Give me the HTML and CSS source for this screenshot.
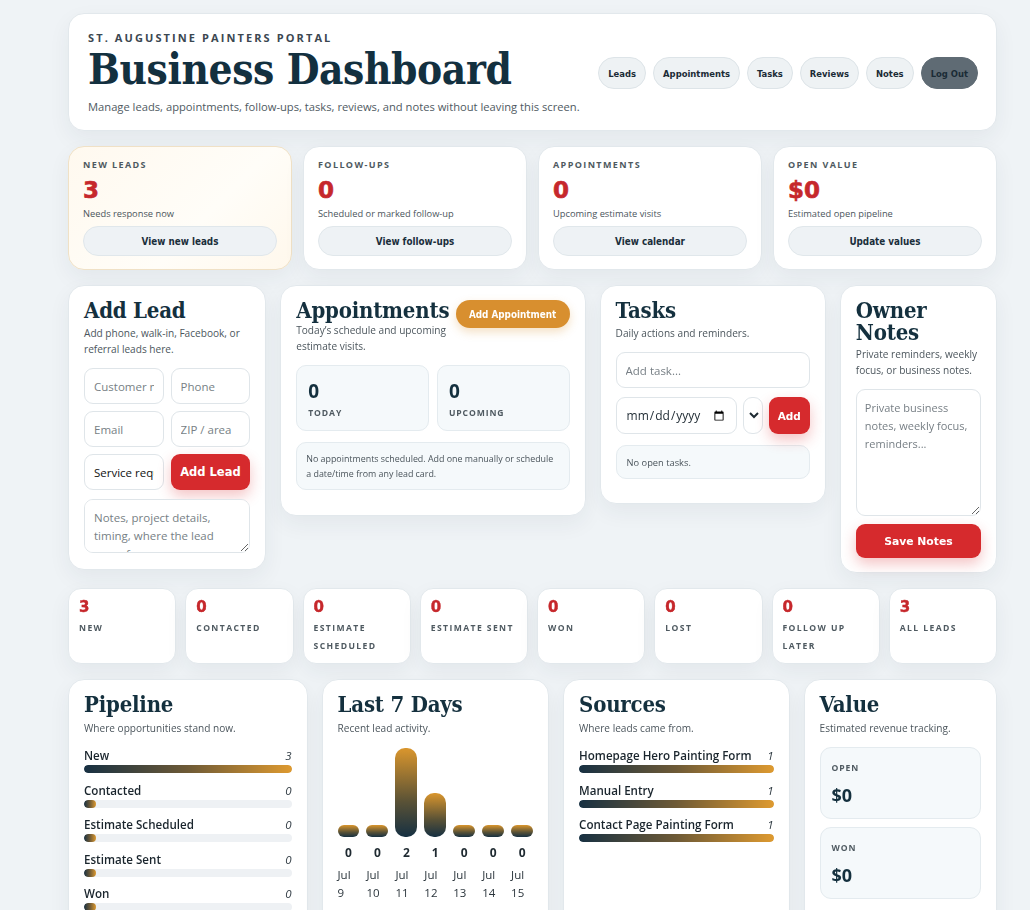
FILE: index.html
```html
<!DOCTYPE html>
<html lang="en">
<head>
<meta charset="utf-8">
<title>Business Dashboard</title>
<link rel="stylesheet" href="styles.css">
</head>
<body>
<main class="page">
  <header class="card hero">
    <div class="hero-text">
      <div class="eyebrow">ST. AUGUSTINE PAINTERS PORTAL</div>
      <h1 class="hero-title">Business Dashboard</h1>
      <p class="hero-sub">Manage leads, appointments, follow-ups, tasks, reviews, and notes without leaving this screen.</p>
    </div>
    <nav class="nav">
      <button class="pill">Leads</button>
      <button class="pill">Appointments</button>
      <button class="pill">Tasks</button>
      <button class="pill">Reviews</button>
      <button class="pill">Notes</button>
      <button class="pill pill-dark">Log Out</button>
    </nav>
  </header>

  <section class="stats">
    <div class="card stat stat-hot">
      <div class="stat-label">NEW LEADS</div>
      <div class="stat-num">3</div>
      <div class="stat-sub">Needs response now</div>
      <button class="soft-btn">View new leads</button>
    </div>
    <div class="card stat">
      <div class="stat-label">FOLLOW-UPS</div>
      <div class="stat-num">0</div>
      <div class="stat-sub">Scheduled or marked follow-up</div>
      <button class="soft-btn">View follow-ups</button>
    </div>
    <div class="card stat">
      <div class="stat-label">APPOINTMENTS</div>
      <div class="stat-num">0</div>
      <div class="stat-sub">Upcoming estimate visits</div>
      <button class="soft-btn">View calendar</button>
    </div>
    <div class="card stat">
      <div class="stat-label">OPEN VALUE</div>
      <div class="stat-num">$0</div>
      <div class="stat-sub">Estimated open pipeline</div>
      <button class="soft-btn">Update values</button>
    </div>
  </section>

  <section class="work">
    <div class="card panel lead-panel">
      <h2 class="panel-title">Add Lead</h2>
      <p class="panel-desc">Add phone, walk-in, Facebook, or referral leads here.</p>
      <div class="lead-form">
        <input class="field" placeholder="Customer name">
        <input class="field" placeholder="Phone">
        <input class="field" placeholder="Email">
        <input class="field" placeholder="ZIP / area">
        <input class="field field-val" value="Service request">
        <button class="red-btn">Add Lead</button>
        <textarea class="field lead-notes" placeholder="Notes, project details, timing, where the lead came from..."></textarea>
      </div>
    </div>

    <div class="card panel appt-panel">
      <div class="appt-head">
        <div class="appt-head-text">
          <h2 class="panel-title">Appointments</h2>
          <p class="panel-desc appt-desc">Today’s schedule and upcoming estimate visits.</p>
        </div>
        <button class="orange-btn">Add Appointment</button>
      </div>
      <div class="appt-boxes">
        <div class="mini-box">
          <div class="mini-num">0</div>
          <div class="mini-label">TODAY</div>
        </div>
        <div class="mini-box">
          <div class="mini-num">0</div>
          <div class="mini-label">UPCOMING</div>
        </div>
      </div>
      <div class="empty-box empty-appt">No appointments scheduled. Add one manually or schedule a date/time from any lead card.</div>
    </div>

    <div class="card panel task-panel">
      <h2 class="panel-title">Tasks</h2>
      <p class="panel-desc">Daily actions and reminders.</p>
      <input class="field task-input" placeholder="Add task...">
      <div class="task-row">
        <input class="field date-field" type="date">
        <select class="field sel-field"><option></option></select>
        <button class="red-btn add-btn">Add</button>
      </div>
      <div class="empty-box empty-task">No open tasks.</div>
    </div>

    <div class="card panel notes-panel">
      <h2 class="panel-title">Owner Notes</h2>
      <p class="panel-desc">Private reminders, weekly focus, or business notes.</p>
      <textarea class="field owner-notes" placeholder="Private business notes, weekly focus, reminders..."></textarea>
      <button class="red-btn save-btn">Save Notes</button>
    </div>
  </section>

  <section class="status-row">
    <div class="card status"><div class="status-num">3</div><div class="status-label">NEW</div></div>
    <div class="card status"><div class="status-num">0</div><div class="status-label">CONTACTED</div></div>
    <div class="card status"><div class="status-num">0</div><div class="status-label">ESTIMATE SCHEDULED</div></div>
    <div class="card status"><div class="status-num">0</div><div class="status-label">ESTIMATE SENT</div></div>
    <div class="card status"><div class="status-num">0</div><div class="status-label">WON</div></div>
    <div class="card status"><div class="status-num">0</div><div class="status-label">LOST</div></div>
    <div class="card status"><div class="status-num">0</div><div class="status-label">FOLLOW UP LATER</div></div>
    <div class="card status"><div class="status-num">3</div><div class="status-label">ALL LEADS</div></div>
  </section>

  <section class="reports">
    <div class="card panel report">
      <h2 class="panel-title">Pipeline</h2>
      <p class="panel-desc">Where opportunities stand now.</p>
      <div class="bars">
        <div class="bar-item"><div class="bar-head"><span>New</span><em>3</em></div><div class="track"><div class="fill" style="width:100%"></div></div></div>
        <div class="bar-item"><div class="bar-head"><span>Contacted</span><em>0</em></div><div class="track"><div class="fill fill-min"></div></div></div>
        <div class="bar-item"><div class="bar-head"><span>Estimate Scheduled</span><em>0</em></div><div class="track"><div class="fill fill-min"></div></div></div>
        <div class="bar-item"><div class="bar-head"><span>Estimate Sent</span><em>0</em></div><div class="track"><div class="fill fill-min"></div></div></div>
        <div class="bar-item"><div class="bar-head"><span>Won</span><em>0</em></div><div class="track"><div class="fill fill-min"></div></div></div>
      </div>
    </div>

    <div class="card panel report">
      <h2 class="panel-title">Last 7 Days</h2>
      <p class="panel-desc">Recent lead activity.</p>
      <div class="chart">
        <div class="col"><div class="col-plot"><div class="col-bar" style="height:12px"></div></div><div class="col-count">0</div><div class="col-date">Jul 9</div></div>
        <div class="col"><div class="col-plot"><div class="col-bar" style="height:12px"></div></div><div class="col-count">0</div><div class="col-date">Jul 10</div></div>
        <div class="col"><div class="col-plot"><div class="col-bar" style="height:89px"></div></div><div class="col-count">2</div><div class="col-date">Jul 11</div></div>
        <div class="col"><div class="col-plot"><div class="col-bar" style="height:44px"></div></div><div class="col-count">1</div><div class="col-date">Jul 12</div></div>
        <div class="col"><div class="col-plot"><div class="col-bar" style="height:12px"></div></div><div class="col-count">0</div><div class="col-date">Jul 13</div></div>
        <div class="col"><div class="col-plot"><div class="col-bar" style="height:12px"></div></div><div class="col-count">0</div><div class="col-date">Jul 14</div></div>
        <div class="col"><div class="col-plot"><div class="col-bar" style="height:12px"></div></div><div class="col-count">0</div><div class="col-date">Jul 15</div></div>
      </div>
    </div>

    <div class="card panel report">
      <h2 class="panel-title">Sources</h2>
      <p class="panel-desc">Where leads came from.</p>
      <div class="bars">
        <div class="bar-item"><div class="bar-head"><span>Homepage Hero Painting Form</span><em>1</em></div><div class="track"><div class="fill" style="width:100%"></div></div></div>
        <div class="bar-item"><div class="bar-head"><span>Manual Entry</span><em>1</em></div><div class="track"><div class="fill" style="width:100%"></div></div></div>
        <div class="bar-item"><div class="bar-head"><span>Contact Page Painting Form</span><em>1</em></div><div class="track"><div class="fill" style="width:100%"></div></div></div>
      </div>
    </div>

    <div class="card panel report">
      <h2 class="panel-title">Value</h2>
      <p class="panel-desc">Estimated revenue tracking.</p>
      <div class="value-list">
        <div class="value-box"><div class="mini-label">OPEN</div><div class="value-num">$0</div></div>
        <div class="value-box"><div class="mini-label">WON</div><div class="value-num">$0</div></div>
      </div>
    </div>
  </section>
</main>
</body>
</html>
```

FILE: styles.css
```css
* { box-sizing: border-box; }

html, body {
  margin: 0;
  padding: 0;
}

body {
  background: #eff3f6;
  font-family: "Open Sans", "Noto Sans", Arial, sans-serif;
  color: #1c2a34;
}

.page {
  width: 929px;
  margin: 13px 0 0 68px;
  display: flex;
  flex-direction: column;
  gap: 15px;
}

.card {
  background: #ffffff;
  border: 1px solid #e2e8ec;
  border-radius: 16px;
  box-shadow: 0 8px 22px rgba(30, 50, 70, 0.06);
}

/* ---------- hero ---------- */
.hero {
  display: flex;
  align-items: center;
  justify-content: space-between;
  gap: 10px;
  padding: 17px 18px 15px 19px;
}

.hero-text {
  flex: 1;
  min-width: 0;
}

.eyebrow {
  font-size: 11px;
  line-height: 14px;
  font-weight: 700;
  letter-spacing: 2.1px;
  color: #3b4751;
}

.hero-title {
  margin: 2px 0 0;
  font-family: "DejaVu Serif Condensed", "DejaVu Serif", Georgia, serif;
  font-stretch: condensed;
  font-size: 42px;
  line-height: 46px;
  font-weight: 700;
  color: #13303f;
  letter-spacing: -0.4px;
  white-space: nowrap;
}

.hero-sub {
  margin: 6px 0 0;
  font-size: 11.2px;
  line-height: 16px;
  color: #4f5a62;
  white-space: nowrap;
}

.nav {
  display: flex;
  gap: 7px;
  flex-shrink: 0;
}

.pill {
  height: 32px;
  padding: 0 9px;
  border-radius: 16px;
  border: 1px solid #dde4e8;
  background: #eef2f4;
  font-family: "DejaVu Sans Condensed", "DejaVu Sans", sans-serif;
  font-stretch: condensed;
  font-weight: 700;
  font-size: 9.4px;
  color: #1b2b36;
  white-space: nowrap;
}

.pill-dark {
  background: #5f6b74;
  border-color: #5f6b74;
}

/* ---------- stat cards ---------- */
.stats {
  display: grid;
  grid-template-columns: repeat(4, minmax(0, 1fr));
  gap: 11px;
}

.stat {
  padding: 12px 14px 13px;
}

.stat-hot {
  background: linear-gradient(135deg, #fff9ef 0%, #fffdf8 60%, #fff8ec 100%);
  border-color: #f0e1c6;
}

.stat-label {
  font-size: 9px;
  line-height: 12px;
  font-weight: 700;
  letter-spacing: 1.4px;
  color: #4e5960;
}

.stat-num {
  margin-top: 5px;
  font-family: "DejaVu Sans", Verdana, sans-serif;
  font-weight: 700;
  font-size: 23px;
  line-height: 28px;
  color: #c6282c;
  -webkit-text-stroke: 0.6px #c6282c;
}

.stat-sub {
  margin-top: 3px;
  font-size: 9.3px;
  line-height: 14px;
  color: #4b555c;
}

.soft-btn {
  display: block;
  width: 100%;
  margin-top: 5px;
  height: 30px;
  border-radius: 15px;
  border: 1px solid #e0e7eb;
  background: #eef2f5;
  font-family: "DejaVu Sans Condensed", "DejaVu Sans", sans-serif;
  font-stretch: condensed;
  font-weight: 700;
  font-size: 9.8px;
  color: #1a2e3b;
}

/* ---------- work row ---------- */
.work {
  display: grid;
  grid-template-columns: minmax(0, 198fr) minmax(0, 305fr) minmax(0, 226fr) minmax(0, 157fr);
  gap: 14px;
  align-items: start;
}

.panel {
  padding: 12px 15px 16px;
}

.panel-title {
  margin: 0;
  font-family: "DejaVu Serif Condensed", "DejaVu Serif", Georgia, serif;
  font-stretch: condensed;
  font-size: 22px;
  line-height: 24px;
  font-weight: 700;
  color: #14303e;
  letter-spacing: -0.2px;
}

.panel-desc {
  margin: 3px 0 0;
  font-size: 10.1px;
  line-height: 16px;
  color: #4c565d;
}

.field {
  height: 36px;
  border: 1px solid #dfe5e9;
  border-radius: 9px;
  background: #ffffff;
  padding: 0 9px;
  font-family: "Open Sans", "Noto Sans", sans-serif;
  font-size: 11.5px;
  color: #1e2a32;
  min-width: 0;
  width: 100%;
}

.field::placeholder {
  color: #777f85;
}

.lead-form {
  margin-top: 11px;
  display: grid;
  grid-template-columns: minmax(0, 1fr) minmax(0, 1fr);
  gap: 7px;
}

.field-val {
  color: #111;
}

.red-btn {
  height: 36px;
  border: none;
  border-radius: 9px;
  background: #d62a2d;
  color: #ffffff;
  font-family: "DejaVu Sans", Verdana, sans-serif;
  font-weight: 700;
  font-size: 11.5px;
  box-shadow: 0 6px 14px rgba(214, 42, 45, 0.28);
}

.lead-notes {
  grid-column: 1 / 3;
  margin-top: 2px;
  height: 54px;
  padding: 9px 9px;
  line-height: 18px;
  resize: vertical;
  overflow-y: scroll;
}

.appt-panel {
  padding-bottom: 25px;
}

.appt-head {
  display: flex;
  align-items: flex-start;
  gap: 8px;
}

.appt-head-text {
  flex: 1;
  min-width: 0;
}

.appt-desc {
  margin-top: 0;
}

.orange-btn {
  flex-shrink: 0;
  margin-top: 2px;
  height: 28px;
  width: 114px;
  padding: 0;
  border: none;
  border-radius: 14px;
  background: #d88f2f;
  color: #ffffff;
  font-family: "DejaVu Sans Condensed", "DejaVu Sans", sans-serif;
  font-stretch: condensed;
  font-weight: 700;
  font-size: 9.8px;
  box-shadow: 0 4px 10px rgba(216, 143, 47, 0.28);
}

.appt-boxes {
  margin-top: 11px;
  display: grid;
  grid-template-columns: minmax(0, 1fr) minmax(0, 1fr);
  gap: 8px;
}

.mini-box {
  padding: 13px 11px 11px;
  border: 1px solid #e4ebef;
  border-radius: 10px;
  background: #f5f9fb;
}

.mini-num {
  font-size: 19px;
  line-height: 24px;
  font-weight: 700;
  color: #14303e;
}

.mini-label {
  margin-top: 4px;
  font-size: 8.6px;
  line-height: 12px;
  font-weight: 700;
  letter-spacing: 0.9px;
  color: #4f5a61;
}

.empty-box {
  border: 1px solid #e4ebef;
  border-radius: 10px;
  background: #f5f9fb;
  font-size: 9.3px;
  color: #4a545b;
}

.empty-appt {
  margin-top: 11px;
  padding: 8px 9px;
  font-size: 8.9px;
  line-height: 15px;
}

.task-panel {
  padding-bottom: 24px;
}

.task-input {
  margin-top: 11px;
  height: 36px;
}

.task-row {
  margin-top: 9px;
  display: grid;
  grid-template-columns: minmax(0, 1fr) 20px 41px;
  gap: 6px;
  align-items: stretch;
}

.date-field {
  height: 37px;
  font-size: 12px;
  padding: 0 9px;
}

.sel-field {
  height: 37px;
  padding: 0 1px;
}

.add-btn {
  height: 37px;
  padding: 0;
  font-size: 10.5px;
}

.empty-task {
  margin-top: 11px;
  height: 34px;
  padding: 0 10px;
  display: flex;
  align-items: center;
}

.notes-panel {
  padding-bottom: 14px;
}

.notes-panel .panel-title {
  line-height: 22px;
  padding-top: 1px;
}

.owner-notes {
  display: block;
  margin-top: 11px;
  height: 127px;
  padding: 9px 8px;
  font-size: 11px;
  line-height: 18px;
  resize: vertical;
}

.save-btn {
  display: block;
  width: 100%;
  margin-top: 8px;
  height: 34px;
  font-size: 10.8px;
}

/* ---------- status row ---------- */
.status-row {
  display: grid;
  grid-template-columns: repeat(8, minmax(0, 1fr));
  gap: 9px;
}

.status {
  height: 76px;
  border-radius: 13px;
  padding: 9px 10px 0;
}

.status-num {
  font-family: "DejaVu Sans", Verdana, sans-serif;
  font-weight: 700;
  font-size: 15px;
  line-height: 18px;
  color: #c6282c;
  -webkit-text-stroke: 0.4px #c6282c;
}

.status-label {
  margin-top: 3px;
  font-size: 8.6px;
  line-height: 18px;
  font-weight: 700;
  letter-spacing: 1.4px;
  color: #4f5a61;
}

/* ---------- reports ---------- */
.reports {
  display: grid;
  grid-template-columns: minmax(0, 239fr) minmax(0, 227fr) minmax(0, 226fr) minmax(0, 193fr);
  gap: 14px;
  align-items: start;
}

.report {
  height: 260px;
  padding-top: 12px;
  border-bottom-left-radius: 0;
  border-bottom-right-radius: 0;
}

.report .panel-desc {
  margin-top: 4px;
}

.bars {
  margin-top: 12px;
  display: flex;
  flex-direction: column;
  gap: 9.5px;
}

.bar-head {
  display: flex;
  justify-content: space-between;
  align-items: baseline;
  font-size: 11.6px;
  line-height: 16px;
}

.bar-head span {
  font-weight: 600;
  color: #1a252d;
}

.bar-head em {
  font-size: 11.5px;
  color: #2f3a42;
}

.track {
  margin-top: 1px;
  height: 8px;
  border-radius: 4px;
  background: #eef1f4;
  overflow: hidden;
}

.fill {
  height: 8px;
  border-radius: 4px;
  background: linear-gradient(90deg, #173042 0%, #6e5a36 50%, #de9a30 100%);
}

.fill-min {
  width: 12px;
}

.chart {
  margin-top: 11px;
  display: grid;
  grid-template-columns: repeat(7, minmax(0, 1fr));
  gap: 7px;
}

.col-plot {
  height: 90px;
  display: flex;
  align-items: flex-end;
}

.col-bar {
  width: 100%;
  border-radius: 10px;
  background: linear-gradient(180deg, #da962d 0%, #5a5236 60%, #163042 100%);
}

.col-count {
  margin-top: 8px;
  text-align: center;
  font-size: 12px;
  line-height: 16px;
  font-weight: 700;
  color: #1f2a31;
}

.col-date {
  margin-top: 5px;
  font-size: 11.5px;
  line-height: 18px;
  color: #2a343b;
  width: 22px;
}

.value-list {
  margin-top: 11px;
  display: flex;
  flex-direction: column;
  gap: 8px;
}

.value-box {
  padding: 14px 11px 12px;
  border: 1px solid #e4ebef;
  border-radius: 11px;
  background: #f5f9fb;
}

.value-box .mini-label {
  margin-top: 0;
}

.value-num {
  margin-top: 10px;
  font-size: 18px;
  line-height: 22px;
  font-weight: 700;
  color: #14303e;
}
```
